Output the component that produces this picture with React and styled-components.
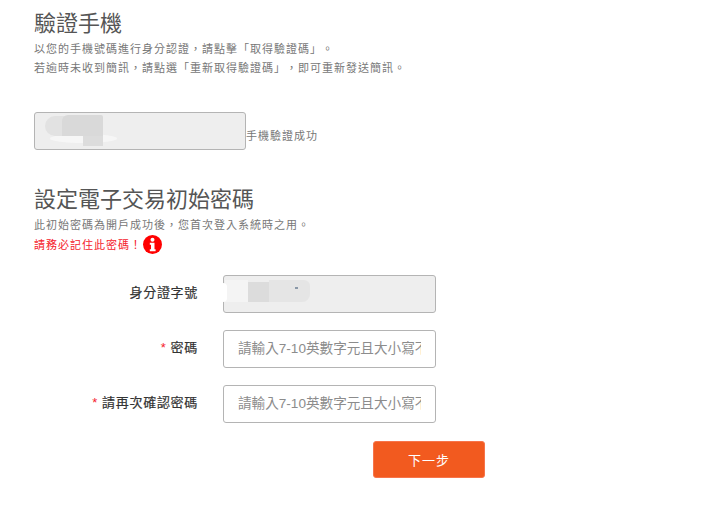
import React from 'react';
import styled, { createGlobalStyle } from 'styled-components';

const Global = createGlobalStyle`
  html, body { margin: 0; padding: 0; background: #fff; }
  body {
    font-family: "Liberation Sans", "Noto Sans CJK TC", sans-serif;
    text-spacing-trim: space-all;
  }
`;
const Page = styled.div`
  width: 720px;
  height: 517px;
  overflow: hidden;
  box-sizing: border-box;
  padding: 11px 0 0 34px;
`;
const Title = styled.h2`
  margin: 0;
  font-size: 22px;
  line-height: 26px;
  font-weight: 400;
  color: #555;
  margin-top: ${p => p.$top || 0}px;
`;
const Note = styled.p`
  margin: 0;
  font-size: 11px;
  line-height: 19px;
  letter-spacing: 1px;
  color: ${p => (p.$warn ? '#f5222d' : '#777')};
  display: flex;
  align-items: center;
`;
const Intro = styled.div`
  margin-top: 3px;
`;
const PhoneRow = styled.div`
  display: flex;
  align-items: center;
  margin-top: 34px;
`;
const Status = styled.span`
  font-size: 11px;
  letter-spacing: 1px;
  color: #777;
  padding-top: 8px;
`;
const FieldWrap = styled.div`
  position: relative;
  width: ${p => p.$w}px;
  height: 38px;
  flex: none;
`;
const Input = styled.input`
  width: 100%;
  height: 100%;
  box-sizing: border-box;
  border: 1px solid #b4b4b4;
  border-radius: 3px;
  padding: 0 14px 2px;
  font-family: inherit;
  font-size: 13.6px;
  color: #555;
  background: ${p => (p.disabled ? '#eee' : '#fff')};
  outline: none;
  &::placeholder { color: #8c8c8c; opacity: 1; }
`;
const Smudge = styled.span`
  position: absolute;
  pointer-events: none;
  background: ${p => p.$c};
  filter: blur(${p => p.$b || 0.7}px);
  border-radius: ${p => p.$r || 0};
`;
const Form = styled.div`
  display: flex;
  flex-direction: column;
  gap: 17px;
  margin-top: 20px;
`;
const Row = styled.div`
  display: flex;
  align-items: center;
`;
const Label = styled.label`
  width: 164px;
  margin-right: 25px;
  padding-bottom: 5px;
  text-align: right;
  font-size: 13px;
  letter-spacing: 0.7px;
  font-weight: 400;
  color: #333;
  -webkit-text-stroke: 0.2px #333;
`;
const Star = styled.span`
  color: #f5222d;
  margin-right: 4px;
  -webkit-text-stroke: 0;
`;
const Actions = styled.div`
  margin: 18px 0 0 339px;
`;
const NextButton = styled.button`
  width: 112px;
  height: 37px;
  border: 1px solid #f7744a;
  border-radius: 3px;
  background: #f25a1f;
  color: #fff;
  font-family: inherit;
  font-size: 13px;
  letter-spacing: 1px;
`;
const WarnIcon = styled.svg`
  width: 19px;
  height: 19px;
  flex: none;
  margin: 0 0 1px 1px;
`;

const InfoIcon = () => (
  <WarnIcon viewBox="0 0 19 19" aria-hidden="true">
    <circle cx="9.5" cy="9.5" r="9.5" fill="#f00" />
    <circle cx="9.5" cy="4.8" r="2" fill="#fff" />
    <path d="M6.8 7.8h4.7v6.4h1.1v2H6.8v-2h1.2V9.8H6.8z" fill="#fff" />
  </WarnIcon>
);

const hint = '請輸入7-10英數字元且大小寫不同';

export default function App() {
  return (
    <Page lang="zh-TW">
      <Global />
      <Title>驗證手機</Title>
      <Intro>
        <Note>以您的手機號碼進行身分認證，請點擊「取得驗證碼」。</Note>
        <Note>若逾時未收到簡訊，請點選「重新取得驗證碼」，即可重新發送簡訊。</Note>
      </Intro>
      <PhoneRow>
        <FieldWrap $w={212}>
          <Input disabled />
          <Smudge $c="#f6f6f6" $r="50%" style={{ left: 16, top: 22, width: 67, height: 9 }} />
          <Smudge $c="#e2e2e2" $r="10px 0 0 10px" style={{ left: 11, top: 4, width: 20, height: 20 }} />
          <Smudge $c="#d9d9d9" $r="6px 2px 0 0" style={{ left: 28, top: 3, width: 41, height: 21 }} />
          <Smudge $c="#dcdcdc" style={{ left: 49, top: 24, width: 20, height: 10 }} />
        </FieldWrap>
        <Status>手機驗證成功</Status>
      </PhoneRow>
      <Title $top={37}>設定電子交易初始密碼</Title>
      <Intro>
        <Note>此初始密碼為開戶成功後，您首次登入系統時之用。</Note>
        <Note $warn>請務必記住此密碼！<InfoIcon /></Note>
      </Intro>
      <Form>
        <Row>
          <Label>身分證字號</Label>
          <FieldWrap $w={213}>
            <Input disabled />
            <Smudge $c="#f4f4f4" style={{ left: 2, top: 5, width: 23, height: 22 }} />
            <Smudge $c="#fff" $r="4px" style={{ left: -6, top: 8, width: 10, height: 19 }} />
            <Smudge $c="#dcdcdc" style={{ left: 25, top: 7, width: 21, height: 20 }} />
            <Smudge $c="#e5e5e5" $r="0 6px 8px 0" style={{ left: 46, top: 5, width: 41, height: 22 }} />
            <Smudge $c="#8a98a8" $b={0.4} style={{ left: 72, top: 12, width: 3, height: 2 }} />
          </FieldWrap>
        </Row>
        <Row>
          <Label><Star>*</Star>密碼</Label>
          <FieldWrap $w={213}>
            <Input placeholder={hint} />
          </FieldWrap>
        </Row>
        <Row>
          <Label><Star>*</Star>請再次確認密碼</Label>
          <FieldWrap $w={213}>
            <Input placeholder={hint} />
          </FieldWrap>
        </Row>
      </Form>
      <Actions>
        <NextButton>下一步</NextButton>
      </Actions>
    </Page>
  );
}
